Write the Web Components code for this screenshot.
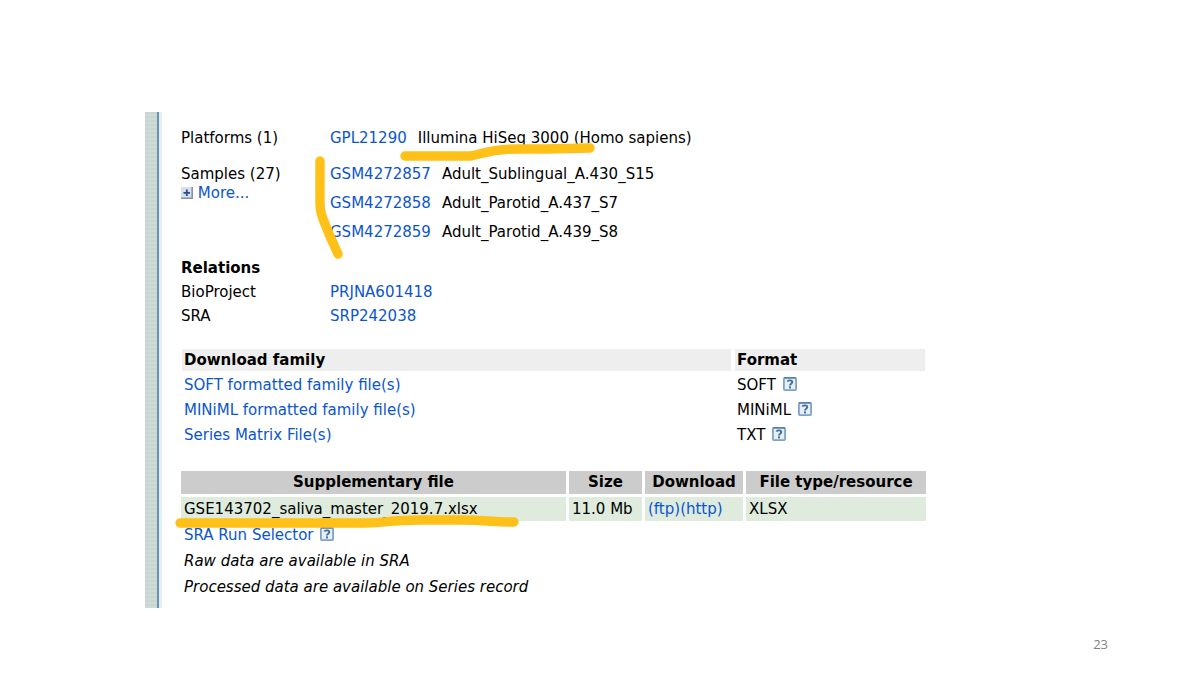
<!DOCTYPE html>
<html lang="en">
<head>
<meta charset="utf-8">
<title>GEO series record</title>
<style>
html, body { margin: 0; background: #fff; }
body { font: 15px/24px "DejaVu Sans", sans-serif; color: #000; }
</style>
</head>
<body>
<geo-slide></geo-slide>
<script>
const define = (name, html) => {
  const t = document.createElement('template');
  t.innerHTML = html;
  customElements.define(name, class extends HTMLElement {
    constructor() {
      super();
      this.attachShadow({ mode: 'open' }).append(t.content.cloneNode(true));
    }
  });
};
const link = 'a { color: #0b55cf; text-decoration: none; }';

define('help-link', `<style>
  :host { display: inline-block; vertical-align: -1px; margin-left: 2px; }
  a, svg { display: block; }
</style>
<a href="#help" aria-label="Help"><svg width="14" height="14" viewBox="0 0 14 14">
  <rect x=".9" y=".9" width="12.2" height="12.2" rx="1" fill="#e6eff7" stroke="#7fa3c5" stroke-width="1.8"/>
  <path d="M1 .8H13" stroke="#5683ad" stroke-width="1.5"/>
  <path d="M4.6 4.7C4.8 2.9 9.3 2.8 9.3 5.1C9.3 6.8 7 6.6 7 8.5" fill="none" stroke="#466f98" stroke-width="1.9"/>
  <rect x="6" y="9.4" width="2" height="2" fill="#466f98"/>
</svg></a>`);

define('plus-icon', `<style>:host { display: inline-block; vertical-align: -1px; } svg { display: block; }</style>
<svg width="12" height="12" viewBox="0 0 12 12">
  <rect width="12" height="12" fill="#d9e0ec"/>
  <path d="M0 11.2H11.2V0" fill="none" stroke="#8490ac" stroke-width="1.6"/>
  <path d="M2.5 5.8H9M5.8 2.5V9" stroke="#24508e" stroke-width="1.8"/>
</svg>`);

define('record-row', `<style>
  :host { display: grid; grid-template-columns: 149px 1fr; }
</style><slot name="label"></slot><slot></slot>`);

define('series-summary', `<style>
  :host { display: block; }
  ${link}
  .samples { margin: 10px 0 9px; }
  .name { padding-top: 5px; line-height: 19px; }
  ul { list-style: none; margin: 0; padding: 0; line-height: 29px; }
  .id { margin-right: 11px; }
  h2 { font: inherit; font-weight: bold; margin: 0; }
</style>
<record-row><span slot="label">Platforms (1)</span><div><a class="id" href="#GPL21290">GPL21290</a>Illumina HiSeq 3000 (Homo sapiens)</div></record-row>
<record-row class="samples">
  <div slot="label" class="name">Samples (27)<br><plus-icon></plus-icon> <a href="#more">More...</a></div>
  <ul>
    <li><a class="id" href="#GSM4272857">GSM4272857</a>Adult_Sublingual_A.430_S15</li>
    <li><a class="id" href="#GSM4272858">GSM4272858</a>Adult_Parotid_A.437_S7</li>
    <li><a class="id" href="#GSM4272859">GSM4272859</a>Adult_Parotid_A.439_S8</li>
  </ul>
</record-row>
<h2>Relations</h2>
<record-row><span slot="label">BioProject</span><div><a href="#PRJNA601418">PRJNA601418</a></div></record-row>
<record-row><span slot="label">SRA</span><div><a href="#SRP242038">SRP242038</a></div></record-row>`);

define('family-table', `<style>
  :host { display: block; margin: 21px 0 0 1px; }
  ${link}
  table { width: 100%; border-collapse: collapse; table-layout: fixed; }
  th, td { padding: 0 2px; text-align: left; line-height: 25px; }
  th { background: #eee; line-height: 22px; border-bottom: 2px solid #fff; }
  .format { width: 186px; border-left: 4px solid #fff; }
</style>
<table>
  <thead><tr><th>Download family</th><th class="format">Format</th></tr></thead>
  <tbody>
    <tr><td><a href="#soft">SOFT formatted family file(s)</a></td><td class="format">SOFT <help-link></help-link></td></tr>
    <tr><td><a href="#miniml">MINiML formatted family file(s)</a></td><td class="format">MINiML <help-link></help-link></td></tr>
    <tr><td><a href="#matrix">Series Matrix File(s)</a></td><td class="format">TXT <help-link></help-link></td></tr>
  </tbody>
</table>`);

define('file-table', `<style>
  :host { display: block; margin: 20px -4px -2px -3px; }
  ${link}
  table { width: 100%; border-collapse: separate; border-spacing: 3px; table-layout: fixed; }
  th, td { padding: 0 3px; line-height: 24px; white-space: nowrap; }
  th { background: #ccc; padding: 0; line-height: 23px; }
  td { background: #deebdd; text-align: left; }
  .size { width: 73px; } .get { width: 98px; } .type { width: 180px; }
  td.size, td.get, td.type { box-sizing: border-box; }
</style>
<table>
  <thead><tr><th>Supplementary file</th><th class="size">Size</th><th class="get">Download</th><th class="type">File type/resource</th></tr></thead>
  <tbody><tr><td>GSE143702_saliva_master_2019.7.xlsx</td><td class="size">11.0 Mb</td><td class="get"><a href="#ftp">(ftp)</a><a href="#http">(http)</a></td><td class="type">XLSX</td></tr></tbody>
</table>`);

define('record-notes', `<style>
  :host { display: block; padding-left: 3px; line-height: 26px; }
  ${link}
  p { margin: 0; } .note { font-style: italic; }
</style>
<p><a href="#selector">SRA Run Selector</a> <help-link></help-link></p>
<p class="note">Raw data are available in SRA</p>
<p class="note">Processed data are available on Series record</p>`);

define('marker-strokes', `<style>
  :host { position: absolute; inset: 0; pointer-events: none; }
  svg { display: block; width: 100%; height: 100%; overflow: visible; }
</style>
<svg fill="none" stroke="#ffc117" stroke-width="9.4" stroke-linecap="round" stroke-linejoin="round" aria-hidden="true">
  <path d="M260 44H325C337 42 345 37 372 37H400L445 36"/>
  <path d="M175 49V92C175 105 180 110 184 122L193 142"/>
  <path d="M35 411H220C245 411 240 408 275 408H315C340 408 345 410 369 410"/>
</svg>`);

define('record-panel', `<style>
  :host { position: relative; display: flex; width: 65%; margin: 0 0 0 145px; }
  .rail { flex: none; width: 12px; border-right: 2px solid #6791b8; box-shadow: 3px 0 #e3f2ef;
    background: repeating-linear-gradient(#c8d5d1 0 2px, #cfdad7 2px 4px); }
  .body { flex: 1; padding: 14px 0 8px 22px; min-width: 0; }
</style>
<div class="rail"></div>
<div class="body"><slot></slot></div>
<marker-strokes></marker-strokes>`);

define('geo-slide', `<style>
  :host { display: flex; flex-direction: column; box-sizing: border-box; min-height: 100vh; padding: 112px 0 19px; }
  footer { margin: auto 92px 0 0; text-align: right; font: 500 13px/24px "Open Sans", sans-serif; color: #808080; }
</style>
<record-panel>
  <series-summary></series-summary>
  <family-table></family-table>
  <file-table></file-table>
  <record-notes></record-notes>
</record-panel>
<footer>23</footer>`);
</script>
</body>
</html>
